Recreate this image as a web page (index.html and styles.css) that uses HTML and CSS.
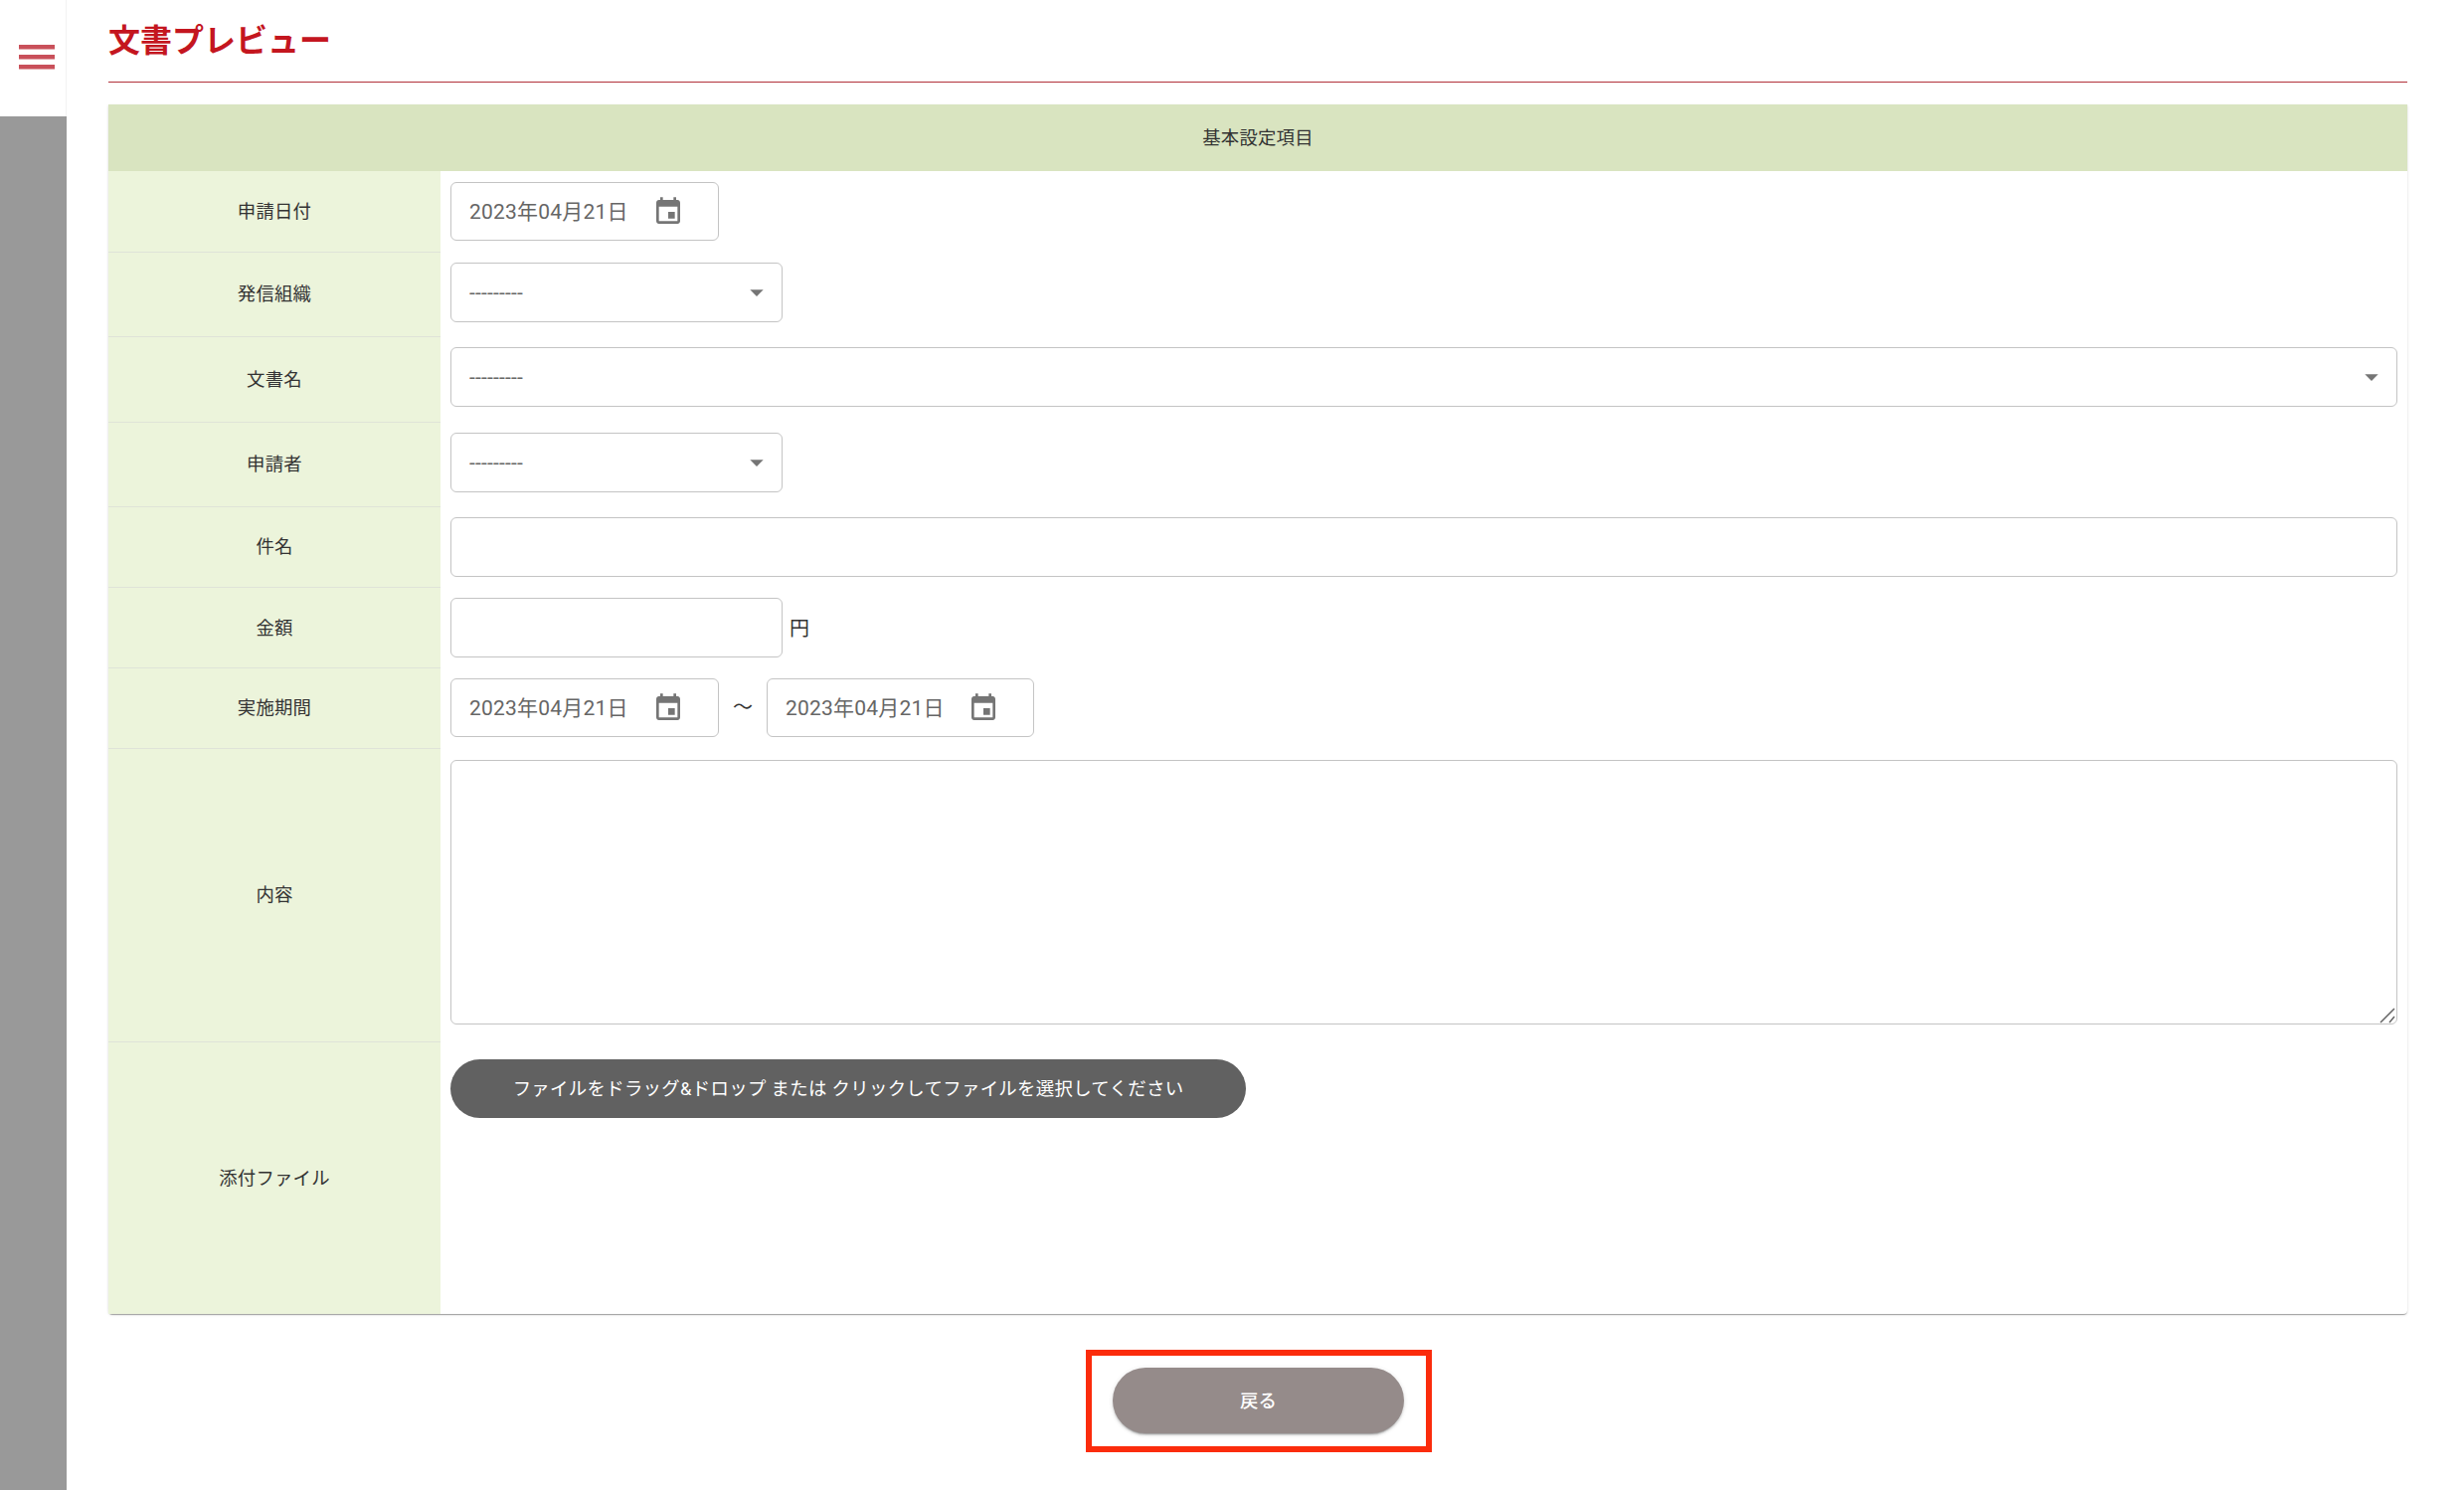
FILE: index.html
```html
<!DOCTYPE html>
<html lang="ja">
<head>
<meta charset="utf-8">
<title>文書プレビュー</title>
<link rel="stylesheet" href="styles.css">
</head>
<body>
<div class="app">
  <aside class="sidebar">
    <div class="sidebar-top">
      <svg class="menu-icon" viewBox="0 0 36 24.5" aria-hidden="true"><rect y="0" width="36" height="4.5"/><rect y="10" width="36" height="4.5"/><rect y="20" width="36" height="4.5"/></svg>
    </div>
    <div class="sidebar-rest"></div>
  </aside>
  <main class="main">
    <h1 class="title">文書プレビュー</h1>
    <section class="card">
      <div class="card-head">基本設定項目</div>

      <div class="label">申請日付</div>
      <div class="cell cell-first">
        <div class="field date"><span>2023年04月21日</span><svg class="cal" viewBox="0 0 24 24"><path d="M17 12h-5v5h5v-5zM16 1v2H8V1H6v2H5c-1.11 0-1.99.9-1.99 2L3 19c0 1.1.89 2 2 2h14c1.1 0 2-.9 2-2V5c0-1.1-.9-2-2-2h-1V1h-2zm3 18H5V8h14v11z"/></svg></div>
      </div>

      <div class="label">発信組織</div>
      <div class="cell">
        <div class="field select short"><span class="dashes">---------</span><svg class="arrow" viewBox="0 0 24 24"><path d="M7 10l5 5 5-5z"/></svg></div>
      </div>

      <div class="label">文書名</div>
      <div class="cell">
        <div class="field select"><span class="dashes">---------</span><svg class="arrow" viewBox="0 0 24 24"><path d="M7 10l5 5 5-5z"/></svg></div>
      </div>

      <div class="label">申請者</div>
      <div class="cell">
        <div class="field select short"><span class="dashes">---------</span><svg class="arrow" viewBox="0 0 24 24"><path d="M7 10l5 5 5-5z"/></svg></div>
      </div>

      <div class="label">件名</div>
      <div class="cell"><input class="field text" type="text"></div>

      <div class="label label-amount">金額</div>
      <div class="cell cell-inline"><input class="field text short" type="text"><span class="unit">円</span></div>

      <div class="label">実施期間</div>
      <div class="cell cell-inline">
        <div class="field date"><span>2023年04月21日</span><svg class="cal" viewBox="0 0 24 24"><path d="M17 12h-5v5h5v-5zM16 1v2H8V1H6v2H5c-1.11 0-1.99.9-1.99 2L3 19c0 1.1.89 2 2 2h14c1.1 0 2-.9 2-2V5c0-1.1-.9-2-2-2h-1V1h-2zm3 18H5V8h14v11z"/></svg></div>
        <span class="tilde">〜</span>
        <div class="field date date-end"><span>2023年04月21日</span><svg class="cal" viewBox="0 0 24 24"><path d="M17 12h-5v5h5v-5zM16 1v2H8V1H6v2H5c-1.11 0-1.99.9-1.99 2L3 19c0 1.1.89 2 2 2h14c1.1 0 2-.9 2-2V5c0-1.1-.9-2-2-2h-1V1h-2zm3 18H5V8h14v11z"/></svg></div>
      </div>

      <div class="label">内容</div>
      <div class="cell cell-area">
        <div class="area-wrap">
          <textarea class="field area"></textarea>
          <svg class="grip" viewBox="0 0 16 16" aria-hidden="true"><path d="M1 15L15 1M10 15L15 9"/></svg>
        </div>
      </div>

      <div class="label label-last">添付ファイル</div>
      <div class="cell cell-file"><button class="file-btn" type="button">ファイルをドラッグ&amp;ドロップ または クリックしてファイルを選択してください</button></div>
    </section>
    <div class="actions">
      <div class="highlight"><button class="back-btn" type="button">戻る</button></div>
    </div>
  </main>
</div>
</body>
</html>
```

FILE: styles.css
```css
* { box-sizing: border-box; }
html, body { margin: 0; height: 100%; background: #fff; }
body {
  font-family: Roboto, "Noto Sans CJK JP", sans-serif;
  font-size: 18.4px;
  letter-spacing: 0.2px;
  color: #333;
  overflow: hidden;
}
.app { display: flex; height: 1498px; }

.sidebar { width: 67px; flex: none; display: flex; flex-direction: column; }
.sidebar-top { height: 117px; padding: 45px 0 0 19px; border-right: 1px solid #f2f2f2; background: #fff; }
.sidebar-rest { flex: 1; background: #999; }
.menu-icon { display: block; width: 36px; height: 24.5px; fill: #c9505a; }

.main { flex: 1; min-width: 0; margin: 0 57px 0 42px; }
.title {
  height: 83px;
  margin: 0;
  padding-top: 21px;
  font-size: 32px;
  line-height: 40px;
  font-weight: 700;
  letter-spacing: 0;
  color: #c4161f;
  border-bottom: 1px solid #b2323b;
}

.card {
  display: grid;
  grid-template-columns: 334px 1fr;
  grid-template-rows: 67px 82px 85px 86px 85px 81px 81px 81px 295px 273px;
  margin-top: 22px;
  border-radius: 0 0 4px 4px;
  background: #fff;
  box-shadow: 0 2px 1px -1px rgba(0,0,0,.2), 0 1px 1px 0 rgba(0,0,0,.14), 0 1px 3px 0 rgba(0,0,0,.12);
}
.card-head {
  grid-column: 1 / -1;
  display: flex;
  align-items: center;
  justify-content: center;
  padding-bottom: 4px;
  background: #d9e4c0;
}
.label {
  display: flex;
  align-items: center;
  justify-content: center;
  padding-bottom: 4px;
  background: #ecf4db;
  border-bottom: 1px solid #dfe3d8;
}
.label-amount { padding-bottom: 2px; }
.label-last { border-bottom: 0; }

.cell { padding: 10px 10px 0; }
.cell-first { padding-top: 11px; }
.cell-area { padding-top: 11px; }
.cell-file { padding-top: 17px; }
.cell-inline { display: flex; align-items: flex-start; }

.field {
  display: flex;
  align-items: center;
  height: 60px;
  width: 100%;
  border: 1px solid #c4c4c4;
  border-radius: 6px;
  background: #fff;
  font: inherit;
  font-size: 21px;
  letter-spacing: 0.2px;
  color: #666;
}
.date {
  flex: none;
  width: 270px;
  height: 59px;
  justify-content: space-between;
  padding: 0 34px 0 18px;
}
.date span { margin-bottom: 4px; }
.date-end { width: 269px; }
.select {
  justify-content: space-between;
  padding: 0 9px 0 18px;
}
.short { flex: none; width: 334px; }
.text { padding: 0 18px; outline: 0; }
.dashes { line-height: 1; }
.cal { width: 32px; height: 32px; flex: none; fill: #757575; }
.arrow { width: 32px; height: 32px; flex: none; fill: #757575; }

.unit { margin: 17px 0 0 7px; line-height: 28px; font-size: 20px; color: #333; }
.tilde {
  flex: none;
  width: 48px;
  margin-top: 15px;
  line-height: 28px;
  font-size: 20px;
  text-align: center;
  color: #333;
}

.area-wrap { position: relative; }
.area { display: block; height: 266px; resize: none; outline: 0; }
.grip {
  position: absolute;
  right: 2px;
  bottom: 1px;
  width: 16px;
  height: 16px;
  fill: none;
  stroke: #666;
  stroke-width: 1.5;
}

.file-btn {
  display: block;
  width: 800px;
  height: 59px;
  padding: 0 0 3px;
  border: 0;
  border-radius: 30px;
  background: #616161;
  color: #fff;
  font: inherit;
  letter-spacing: 0.32px;
}

.actions { display: flex; justify-content: center; margin-top: 36px; padding-left: 2px; }
.highlight {
  width: 348px;
  height: 103px;
  padding: 12px 21px;
  border: 6px solid #fb2c0c;
}
.back-btn {
  display: block;
  width: 293px;
  height: 66px;
  padding: 0 0 3px;
  border: 0;
  border-radius: 33px;
  background: #958b8a;
  color: #fff;
  font: inherit;
  font-weight: 500;
  box-shadow: 0 3px 1px -2px rgba(0,0,0,.2), 0 2px 2px 0 rgba(0,0,0,.14), 0 1px 5px 0 rgba(0,0,0,.12);
}
```
